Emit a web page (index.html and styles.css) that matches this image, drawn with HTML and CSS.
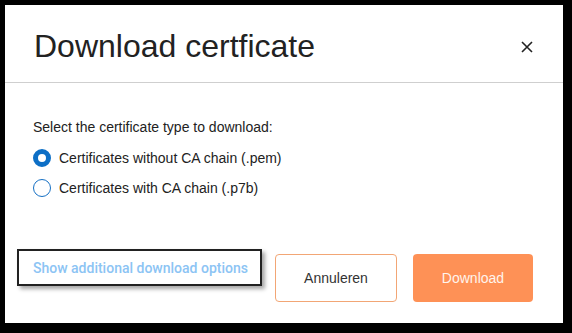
FILE: index.html
```html
<!DOCTYPE html>
<html lang="en">
<head>
    <meta charset="UTF-8">
    <meta name="viewport" content="width=device-width, initial-scale=1.0">
    <title>Download certficate</title>
    <link rel="stylesheet" href="styles.css">
</head>
<body>
    <div class="dialog">
        <div class="dialog-header">
            <h2>Download certficate</h2>
            <button class="close" title="Sluiten">
                <svg width="12" height="12" viewBox="0 0 12 12">
                    <path d="M1 1 L11 11 M11 1 L1 11" stroke="#222" stroke-width="1.6" fill="none" />
                </svg>
            </button>
        </div>
        <div class="dialog-body">
            <p class="label">Select the certificate type to download:</p>
            <label class="option">
                <input type="radio" name="certType" value="pem" checked />
                Certificates without CA chain (.pem)
            </label>
            <label class="option">
                <input type="radio" name="certType" value="p7b" />
                Certificates with CA chain (.p7b)
            </label>
        </div>
        <div class="dialog-footer">
            <div class="more-options">
                <a href="#">Show additional download options</a>
            </div>
            <div class="actions">
                <button class="btn btn-outline">Annuleren</button>
                <button class="btn btn-primary">Download</button>
            </div>
        </div>
    </div>
</body>
</html>
```

FILE: styles.css
```css
body {
    margin: 0;
    padding: 0;
    background-color: #000;
    font-family: "Liberation Sans", Arial, sans-serif;
    width: 572px;
    height: 333px;
    overflow: hidden;
}

.dialog {
    width: 558px;
    height: 318px;
    margin: 5px 0 0 5px;
    background-color: #fff;
    display: flex;
    flex-direction: column;
    box-sizing: border-box;
}

.dialog-header {
    height: 78px;
    padding: 0 30px 0 29px;
    display: flex;
    align-items: center;
    justify-content: space-between;
    border-bottom: 1px solid #cfcfcf;
    box-sizing: border-box;
}

.dialog-header h2 {
    margin: 0;
    font-size: 32px;
    font-weight: normal;
    color: #222;
    padding-top: 6px;
}

.close {
    background: none;
    border: none;
    padding: 0;
    margin-top: 6px;
    cursor: pointer;
    display: flex;
}

.dialog-body {
    padding: 36px 28px 0 28px;
}

.label {
    margin: 0 0 8px 0;
    font-size: 14px;
    line-height: 16px;
    color: #222;
}

.option {
    display: flex;
    align-items: center;
    gap: 8px;
    height: 30px;
    font-size: 14px;
    color: #222;
    cursor: pointer;
}

.option input {
    appearance: none;
    -webkit-appearance: none;
    width: 18px;
    height: 18px;
    margin: 0;
    border: 1.5px solid #1670c4;
    border-radius: 50%;
    box-sizing: border-box;
    background: #fff;
}

.option input:checked {
    border: 5.5px solid #0d6fc6;
}

.dialog-footer {
    margin-top: auto;
    padding: 0 30px 21px 12px;
    display: flex;
    align-items: flex-end;
    justify-content: space-between;
}

.more-options {
    width: 245px;
    height: 37px;
    margin-bottom: 16px;
    border: 2px solid #222;
    box-sizing: border-box;
    display: flex;
    align-items: center;
    padding-left: 14px;
    box-shadow: 3px 3px 4px rgba(0, 0, 0, 0.35);
}

.more-options a {
    font-family: Roboto, sans-serif;
    font-size: 14px;
    font-weight: 500;
    color: #8cc4f4;
    text-decoration: none;
}

.actions {
    display: flex;
    gap: 16px;
}

.btn {
    height: 48px;
    font-family: "Liberation Sans", Arial, sans-serif;
    font-size: 14px;
    border-radius: 4px;
    cursor: pointer;
    box-sizing: border-box;
}

.btn-outline {
    width: 122px;
    background-color: #fff;
    border: 1px solid #f2a675;
    color: #333;
}

.btn-primary {
    width: 120px;
    background-color: #fe9156;
    border: none;
    color: #fff4ec;
}
```
